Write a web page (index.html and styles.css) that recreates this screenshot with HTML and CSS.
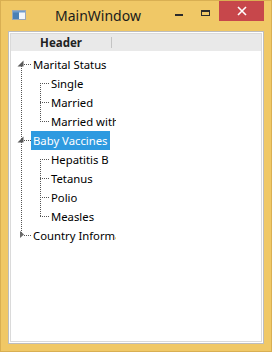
FILE: index.html
```html
<!DOCTYPE html>
<html lang="en">
<head>
    <meta charset="UTF-8">
    <title>MainWindow</title>
    <link rel="stylesheet" href="styles.css">
</head>
<body>
    <div class="window">
        <!-- Title bar -->
        <div class="titlebar">
            <svg class="app-icon" width="14" height="10" viewBox="0 0 14 10">
                <rect x="0.5" y="0.5" width="13" height="9" fill="#f4f6f8" stroke="#9aa7b4"/>
                <rect x="1" y="1" width="6" height="8" fill="#4a7fb5"/>
                <rect x="1" y="1" width="12" height="1.5" fill="#6f9ccc"/>
            </svg>
            <span class="title">MainWindow</span>
            <div class="caption-btns">
                <span class="btn btn-min"><i></i></span>
                <span class="btn btn-max"><i></i></span>
                <span class="btn btn-close">
                    <svg width="10" height="10" viewBox="0 0 10 10">
                        <path d="M1 1 L9 9 M9 1 L1 9" stroke="#fff" stroke-width="1.6"/>
                    </svg>
                </span>
            </div>
        </div>

        <!-- Client area -->
        <div class="client">
            <div class="treeview">
                <div class="header">
                    <div class="col">Header</div>
                    <div class="sep"></div>
                </div>
                <div class="body">
                    <ul class="tree">
                        <li>
                            <div class="row top">
                                <span class="exp">
                                    <svg width="7" height="19" viewBox="0 0 7 19"><polygon points="6.5,5.5 6.5,11.5 0.5,11.5" fill="#595959"/></svg>
                                </span>
                                <span class="hline"></span>
                                <span class="label">Marital Status</span>
                            </div>
                            <ul class="sub">
                                <li><div class="row child"><span class="hline"></span><span class="label">Single</span></div></li>
                                <li><div class="row child"><span class="hline"></span><span class="label">Married</span></div></li>
                                <li><div class="row child"><span class="hline"></span><span class="label">Married with Children</span></div></li>
                            </ul>
                        </li>
                        <li>
                            <div class="row top">
                                <span class="exp">
                                    <svg width="7" height="19" viewBox="0 0 7 19"><polygon points="6.5,5.5 6.5,11.5 0.5,11.5" fill="#595959"/></svg>
                                </span>
                                <span class="hline"></span>
                                <span class="label selected">Baby Vaccines</span>
                            </div>
                            <ul class="sub">
                                <li><div class="row child"><span class="hline"></span><span class="label">Hepatitis B</span></div></li>
                                <li><div class="row child"><span class="hline"></span><span class="label">Tetanus</span></div></li>
                                <li><div class="row child"><span class="hline"></span><span class="label">Polio</span></div></li>
                                <li><div class="row child"><span class="hline"></span><span class="label">Measles</span></div></li>
                            </ul>
                        </li>
                        <li>
                            <div class="row top">
                                <span class="exp">
                                    <svg width="7" height="19" viewBox="0 0 7 19"><polygon points="3,5 7,8.5 3,12" fill="#6a6a6a"/></svg>
                                </span>
                                <span class="hline"></span>
                                <span class="label">Country Information</span>
                            </div>
                        </li>
                    </ul>
                </div>
            </div>
        </div>
    </div>
</body>
</html>
```

FILE: styles.css
```css
body {
    margin: 0;
    font-family: "Noto Sans", "Open Sans", sans-serif;
    color: #000;
}
.window {
    width: 272px;
    height: 352px;
    box-sizing: border-box;
    background-color: #f0c866;
    border: 1px solid #d9af52;
    display: flex;
    flex-direction: column;
}

/* title bar */
.titlebar {
    height: 30px;
    flex-shrink: 0;
    display: flex;
    align-items: flex-start;
}
.app-icon {
    margin: 9px 0 0 11px;
}
.title {
    margin-left: 29px;
    font-size: 14px;
    line-height: 30px;
    color: #1b1b1b;
}
.caption-btns {
    margin-left: auto;
    margin-right: 7px;
    display: flex;
}
.btn {
    height: 20px;
    display: flex;
    justify-content: center;
}
.btn-min {
    width: 26px;
}
.btn-min i {
    width: 8px;
    height: 2px;
    margin-top: 13px;
    background-color: #2b2b2b;
}
.btn-max {
    width: 27px;
}
.btn-max i {
    width: 7px;
    height: 3px;
    margin-top: 9px;
    border: 1px solid #2b2b2b;
    border-top-width: 2px;
}
.btn-close {
    width: 45px;
    align-items: center;
    background-color: #c7474b;
}

/* client */
.client {
    flex: 1;
    margin: 0 7px 7px;
    border: 1px solid #bdbdbd;
    padding: 1px;
    background-color: #fff;
    display: flex;
}
.treeview {
    flex: 1;
    border: 1px solid #dadada;
    display: flex;
    flex-direction: column;
}
.header {
    height: 17px;
    background-color: #e9e9e9;
    display: flex;
    align-items: center;
}
.col {
    width: 100px;
    text-align: center;
    font-size: 11.5px;
    font-weight: bold;
    color: #222;
}
.sep {
    width: 1px;
    height: 11px;
    background-color: #c4c4c4;
}
.body {
    width: 105px;
    overflow: hidden;
    padding-top: 4px;
    font-size: 11.3px;
}

/* tree */
.tree, .sub {
    list-style: none;
    margin: 0;
    padding: 0;
    background-image: repeating-linear-gradient(to bottom, #555 0 1px, transparent 1px 2px);
    background-repeat: no-repeat;
    background-size: 1px calc(100% - 19px);
}
.tree {
    background-position: 10px 9px;
}
.sub {
    background-position: 29px 9px;
}
.row {
    height: 19px;
    display: flex;
    align-items: center;
    white-space: nowrap;
}
.row.top {
    padding-left: 6px;
}
.row.child {
    padding-left: 29px;
}
.exp {
    width: 7px;
    height: 19px;
    flex-shrink: 0;
}
.exp svg {
    display: block;
}
.hline {
    flex-shrink: 0;
    height: 0;
    border-top: 1px dotted #555;
}
.top .hline {
    width: 7px;
}
.child .hline {
    width: 9px;
}
.label {
    padding: 0 2px;
    line-height: 19px;
}
.label.selected {
    background-color: #2e9ae0;
    color: #fff;
}
```
